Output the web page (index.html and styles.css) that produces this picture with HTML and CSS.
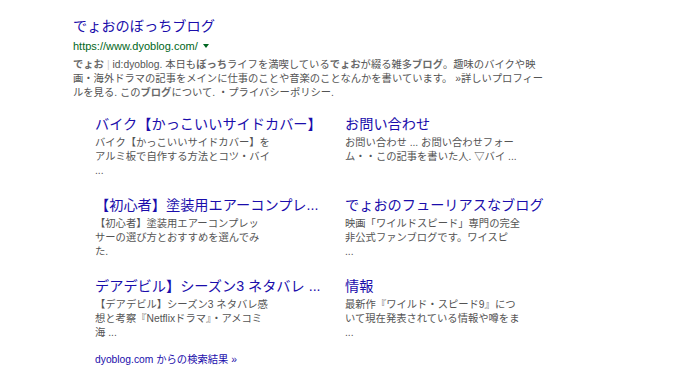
FILE: index.html
```html
<!DOCTYPE html>
<html>
<head>
  <meta charset="utf-8">
  <link rel="stylesheet" href="styles.css">
</head>
<body>
  <div class="result">
    <a class="title" href="#">でょおのぼっちブログ</a>
    <div class="url">https://www.dyoblog.com/ <span class="arrow"></span></div>
    <div class="desc"><b>でょお</b><span class="sep">|</span>id:dyoblog. 本日も<b>ぼっち</b>ライフを満喫している<b>でょお</b>が綴る雑多<b>ブログ</b>。趣味のバイクや映<br>画・海外ドラマの記事をメインに仕事のことや音楽のことなんかを書いています。 »詳しいプロフィー<br>ルを見る. この<b>ブログ</b>について. ・プライバシーポリシー.</div>

    <div class="sitelinks">
      <div class="link">
        <a class="link-title" href="#">バイク【かっこいいサイドカバー】</a>
        <div class="snippet">バイク【かっこいいサイドカバー】を<br>アルミ板で自作する方法とコツ・バイ<br>...</div>
      </div>
      <div class="link">
        <a class="link-title" href="#">お問い合わせ</a>
        <div class="snippet">お問い合わせ ... お問い合わせフォー<br>ム・・この記事を書いた人. ▽バイ ...</div>
      </div>
      <div class="link">
        <a class="link-title" href="#">【初心者】塗装用エアーコンプレ...</a>
        <div class="snippet">【初心者】塗装用エアーコンプレッ<br>サーの選び方とおすすめを選んでみ<br>た.</div>
      </div>
      <div class="link">
        <a class="link-title" href="#">でょおのフューリアスなブログ</a>
        <div class="snippet">映画「ワイルドスピード」専門の完全<br>非公式ファンブログです。ワイスピ<br>...</div>
      </div>
      <div class="link">
        <a class="link-title" href="#">デアデビル】シーズン3 ネタバレ ...</a>
        <div class="snippet">【デアデビル】シーズン3 ネタバレ感<br>想と考察『Netflixドラマ』・アメコミ<br>海 ...</div>
      </div>
      <div class="link">
        <a class="link-title" href="#">情報</a>
        <div class="snippet">最新作『ワイルド・スピード9』につ<br>いて現在発表されている情報や噂をま<br>...</div>
      </div>
    </div>

    <a class="more" href="#">dyoblog.com からの検索結果 »</a>
  </div>
</body>
</html>
```

FILE: styles.css
```css
body {
  margin: 0;
  background: #fff;
  font-family: "Liberation Sans", "Noto Sans CJK JP", sans-serif;
}
a {
  text-decoration: none;
}
.result {
  padding: 18px 0 0 73px;
}
.title {
  display: block;
  color: #1a0dab;
  font-size: 14.2px;
  line-height: 17px;
}
.url {
  margin-top: 4px;
  color: #006621;
  font-size: 11px;
  line-height: 14px;
}
.arrow {
  display: inline-block;
  margin-left: 2px;
  vertical-align: 2px;
  border-top: 4px solid #006621;
  border-left: 3px solid transparent;
  border-right: 3px solid transparent;
}
.desc {
  margin-top: 5px;
  color: #545454;
  font-size: 10.3px;
  line-height: 14px;
  white-space: nowrap;
}
.desc b {
  color: #6a6a6a;
}
.sep {
  color: #ccc;
  margin: 0 3px;
}
.sitelinks {
  display: grid;
  grid-template-columns: 250px 250px;
  row-gap: 18.5px;
  margin-top: 15.5px;
  padding-left: 22px;
}
.link-title {
  display: block;
  color: #1a0dab;
  font-size: 14.2px;
  line-height: 17px;
  white-space: nowrap;
}
.snippet {
  height: 42px;
  margin-top: 3.5px;
  color: #545454;
  font-size: 10.3px;
  line-height: 14px;
  white-space: nowrap;
}
.more {
  display: block;
  margin: 13px 0 0 22px;
  color: #1a0dab;
  font-size: 10.3px;
  line-height: 14px;
}
```
